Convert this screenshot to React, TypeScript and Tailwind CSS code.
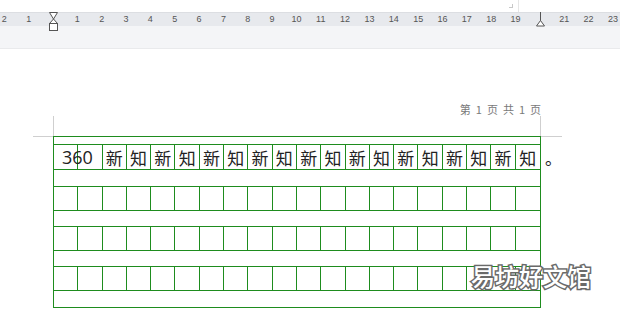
import React from "react";

const G = "border-[#1e8c1e]";

function SquareRow({ h }: { h: string }) {
  return (
    <div className={`grid grid-cols-20 ${h} border-b ${G}`}>
      {Array.from({ length: 20 }).map((_, i) => (
        <div key={i} className={i < 19 ? `border-r ${G}` : ""} />
      ))}
    </div>
  );
}

function ThinRow({ h }: { h: string }) {
  return <div className={`${h} border-b ${G}`} />;
}

export default function App() {
  const ruler: (number | null)[] = [];
  for (let k = -2; k <= 23; k++) ruler.push(k === 0 || k === 20 ? null : Math.abs(k));
  const chars: string[] = [];
  for (let i = 0; i < 18; i++) chars.push(i % 2 === 0 ? "新" : "知");
  const header = ["第", "1", "页", "共", "1", "页"];

  return (
    <div className="relative w-[620px] h-[309px] overflow-hidden bg-white font-['Liberation_Sans',sans-serif]">
      {/* top toolbar strip */}
      <div className="relative h-[12px] bg-white">
        <div className="absolute left-[509px] top-[4px] w-[4px] h-[4px] border-r border-b border-[#c8c8c8]" />
        <div className="absolute left-[518px] top-0 w-px h-[12px] bg-[#e6e6e6]" />
      </div>
      {/* ruler */}
      <div className="relative h-[14px] bg-[#e7e9ed] border-t border-[#dcdee2]">
        <div className="flex h-full ml-[-7.875px] items-center">
          {ruler.map((n, i) => (
            <div key={i} className="w-[24.35px] shrink-0 text-center text-[9px] leading-none text-[#555]">
              {n ?? ""}
            </div>
          ))}
        </div>
      </div>
      <div className="h-[23px] bg-[#f4f5f7] border-b border-[#e9eaec]" />
      {/* ruler markers */}
      <svg className="absolute left-[48px] top-[12px]" width="11" height="20" viewBox="0 0 11 20">
        <path d="M1.5 0.5 H9.5 L5.5 7 Z M5.5 7 L9.5 11.5 H1.5 Z" fill="#fff" stroke="#555" strokeWidth="1" />
        <rect x="1.5" y="11.5" width="8" height="7" fill="#fff" stroke="#555" strokeWidth="1" />
      </svg>
      <svg className="absolute left-[535px] top-[12px]" width="11" height="15" viewBox="0 0 11 15">
        <line x1="5.5" y1="0" x2="5.5" y2="9" stroke="#555" strokeWidth="1" />
        <path d="M5.5 8.5 L9.5 14 H1.5 Z" fill="#fff" stroke="#555" strokeWidth="1" />
      </svg>

      {/* page */}
      <div className="flex flex-col">
        <div className="h-[54px]" />
        <div className="flex h-[13px] w-[541px] items-start justify-end gap-[5px] text-[11px] leading-[13px] text-[#7a7a7a] font-['Noto_Sans_CJK_SC',sans-serif]">
          {header.map((t, i) => (
            <span key={i}>{t}</span>
          ))}
        </div>
        <div className="flex h-[20px]">
          <div className="ml-[33px] w-[21px] border-r border-[#cfcfcf]" />
          <div className="w-[487px] border-r border-[#cfcfcf]" />
        </div>
        <div className="flex items-start">
          <div className="ml-[33px] w-[20px] border-t border-[#cfcfcf]" />
          <div className={`w-[488px] border ${G} flex flex-col`}>
            <ThinRow h="h-[8px]" />
            <div className={`grid grid-cols-20 h-[25px] border-b ${G} text-[#222]`}>
              {Array.from({ length: 20 }).map((_, i) => (
                <div
                  key={i}
                  className={`${i < 19 ? `border-r ${G}` : ""} flex items-center ${i === 0 ? "justify-start" : "justify-center"}`}
                >
                  {i === 0 ? (
                    <span className="pl-[8px] whitespace-nowrap text-[18px] leading-none font-['Open_Sans',sans-serif]">360</span>
                  ) : i === 1 ? null : (
                    <span className="text-[17px] leading-none font-['Noto_Sans_CJK_SC',sans-serif]">{chars[i - 2]}</span>
                  )}
                </div>
              ))}
            </div>
            <ThinRow h="h-[17px]" />
            <SquareRow h="h-[24px]" />
            <ThinRow h="h-[16px]" />
            <SquareRow h="h-[24px]" />
            <ThinRow h="h-[16px]" />
            <SquareRow h="h-[24px]" />
            <div className="h-[16px]" />
          </div>
          <div className="w-[21px] flex flex-col">
            <div className="border-t border-[#cfcfcf]" />
            <div className="h-[8px]" />
            <div className="h-[25px] flex items-center pl-[4px] text-[17px] leading-none text-[#222] font-['Noto_Sans_CJK_SC',sans-serif]">
              。
            </div>
          </div>
        </div>
      </div>

      {/* watermark */}
      <div className="absolute left-[471px] top-[261px] text-[24px] leading-[30px] text-white font-medium font-['Noto_Sans_CJK_SC',sans-serif] [-webkit-text-stroke:3px_#6a6a6a] [paint-order:stroke_fill]">
        易坊好文馆
      </div>
    </div>
  );
}
